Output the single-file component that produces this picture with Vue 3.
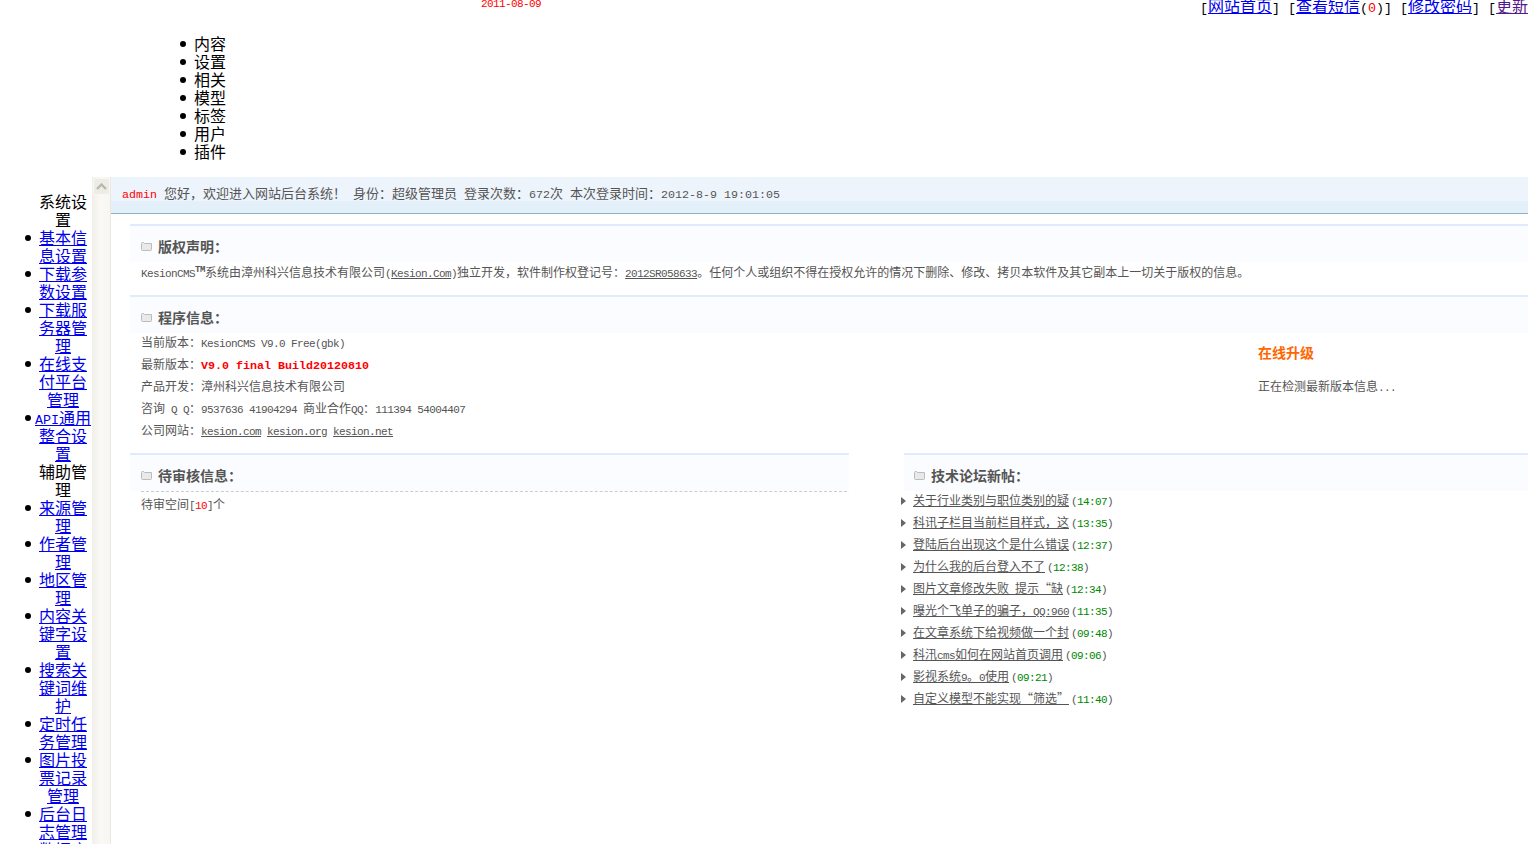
<script setup>
const menu = ["内容", "设置", "相关", "模型", "标签", "用户", "插件"];

const sysLinks = ["基本信息设置", "下载参数设置", "下载服务器管理", "在线支付平台管理"];
const auxLinks = [
  "来源管理",
  "作者管理",
  "地区管理",
  "内容关键字设置",
  "搜索关键词维护",
  "定时任务管理",
  "图片投票记录管理",
  "后台日志管理",
  "数据库备份",
];

const topics = [
  { title: "关于行业类别与职位类别的疑", time: "14:07" },
  { title: "科讯子栏目当前栏目样式，这", time: "13:35" },
  { title: "登陆后台出现这个是什么错误", time: "12:37" },
  { title: "为什么我的后台登入不了", time: "12:38" },
  { title: "图片文章修改失败 提示“缺", time: "12:34" },
  { title: "曝光个飞单子的骗子，QQ:960", time: "11:35" },
  { title: "在文章系统下给视频做一个封", time: "09:48" },
  { title: "科汛cms如何在网站首页调用", time: "09:06" },
  { title: "影视系统9。0使用", time: "09:21" },
  { title: "自定义模型不能实现“筛选”", time: "11:40" },
];

// ascii runs get the narrower mono face, the rest stays in the cjk face
const runs = (text) => text.match(/[\x20-\x7e]+|[^\x20-\x7e]+/g);
const isEn = (run) => /^[\x20-\x7e]/.test(run);
</script>

<template>
  <div class="page">
    <div class="top">
      <span class="date">2011-08-09</span>
      <div class="toplinks">
        [<a href="#">网站首页</a>]&nbsp;[<a href="#">查看短信</a>(<b>0</b>)]&nbsp;[<a href="#">修改密码</a>]&nbsp;[<a href="#" class="seen">更新缓存</a>]
      </div>
    </div>

    <ul class="menu">
      <li v-for="m in menu" :key="m">{{ m }}</li>
    </ul>

    <div class="main">
      <div class="side">
        <div class="side-title">系统设置</div>
        <ul class="side-list">
          <li v-for="s in sysLinks" :key="s"><a href="#">{{ s }}</a></li>
          <li>
            <a href="#"><span class="api"><span class="api-en">API</span>通用</span>整合设置</a>
          </li>
        </ul>
        <div class="side-title">辅助管理</div>
        <ul class="side-list">
          <li v-for="s in auxLinks" :key="s"><a href="#">{{ s }}</a></li>
        </ul>
      </div>

      <div class="bar">
        <div class="bar-btn">
          <svg width="11" height="7" viewBox="0 0 11 7"><path d="M1 6 L5.5 1.5 L10 6" fill="none" stroke="#b9b8b0" stroke-width="2.4" /></svg>
        </div>
      </div>

      <div class="content">
        <div class="welcome">
          <span class="w-en red">admin</span><span class="w-en">&nbsp;</span>您好，欢迎进入网站后台系统！<span class="w-en">&nbsp;</span>身份：超级管理员<span class="w-en">&nbsp;</span>登录次数：<span class="w-en">672</span>次<span class="w-en">&nbsp;</span>本次登录时间：<span class="w-en">2012-8-9 19:01:05</span>
        </div>

        <div class="panels">
          <section class="panel copy">
            <h3>
              <svg class="folder" width="11" height="9" viewBox="0 0 11 9"><path d="M1.5 8.5 H9.5 Q10.5 8.5 10.5 7.5 V1.5 H3.5 L2.5 .5 H1 L.5 1.5 V7.5 Q.5 8.5 1.5 8.5 Z" fill="#e9e9e9" stroke="#bcbcbc" /></svg>
              版权声明：
            </h3>
            <div class="row copy-row">
              <span class="en">KesionCMS</span><sup class="tm">TM</sup>系统由漳州科兴信息技术有限公司<span class="en">(<a href="#">Kesion.Com</a>)</span>独立开发，软件制作权登记号：<a href="#" class="en">2012SR058633</a>。任何个人或组织不得在授权允许的情况下删除、修改、拷贝本软件及其它副本上一切关于版权的信息。
            </div>
          </section>

          <section class="panel info">
            <h3>
              <svg class="folder" width="11" height="9" viewBox="0 0 11 9"><path d="M1.5 8.5 H9.5 Q10.5 8.5 10.5 7.5 V1.5 H3.5 L2.5 .5 H1 L.5 1.5 V7.5 Q.5 8.5 1.5 8.5 Z" fill="#e9e9e9" stroke="#bcbcbc" /></svg>
              程序信息：
            </h3>
            <div class="info-body">
              <div class="info-rows">
                <div class="row">当前版本：<span class="en">KesionCMS V9.0 Free(gbk)</span></div>
                <div class="row">最新版本：<span class="build">V9.0 final Build20120810</span></div>
                <div class="row">产品开发：漳州科兴信息技术有限公司</div>
                <div class="row">咨询<span class="en"> Q Q</span>：<span class="en">9537636 41904294 </span>商业合作<span class="en">QQ</span>：<span class="en">111394 54004407</span></div>
                <div class="row">公司网站：<a href="#" class="en">kesion.com</a><span class="en">&nbsp;</span><a href="#" class="en">kesion.org</a><span class="en">&nbsp;</span><a href="#" class="en">kesion.net</a></div>
              </div>
              <div class="upgrade">
                <div class="up-title">在线升级</div>
                <div class="up-text">正在检测最新版本信息<span class="en">...</span></div>
              </div>
            </div>
          </section>

          <div class="columns">
            <section class="panel pending">
              <h3 class="dashed">
                <svg class="folder" width="11" height="9" viewBox="0 0 11 9"><path d="M1.5 8.5 H9.5 Q10.5 8.5 10.5 7.5 V1.5 H3.5 L2.5 .5 H1 L.5 1.5 V7.5 Q.5 8.5 1.5 8.5 Z" fill="#e9e9e9" stroke="#bcbcbc" /></svg>
                待审核信息：
              </h3>
              <div class="row pending-row">待审空间<span class="en">[<span class="red">10</span>]</span>个</div>
            </section>

            <section class="panel forum">
              <h3>
                <svg class="folder" width="11" height="9" viewBox="0 0 11 9"><path d="M1.5 8.5 H9.5 Q10.5 8.5 10.5 7.5 V1.5 H3.5 L2.5 .5 H1 L.5 1.5 V7.5 Q.5 8.5 1.5 8.5 Z" fill="#e9e9e9" stroke="#bcbcbc" /></svg>
                技术论坛新帖：
              </h3>
              <ul class="topics">
                <li v-for="t in topics" :key="t.title">
                  <a href="#"><span v-for="(r, i) in runs(t.title)" :key="i" :class="{ en: isEn(r) }">{{ r }}</span></a>
                  <span class="en when">(<span class="green">{{ t.time }}</span>)</span>
                </li>
              </ul>
            </section>
          </div>
        </div>
      </div>
    </div>
  </div>
</template>

<style>
html,
body {
  overflow: hidden;
}
</style>

<style scoped>
.page {
  height: 844px;
  overflow: hidden;
  display: flex;
  flex-direction: column;
  font-family: "Liberation Serif", "Noto Sans CJK SC", serif;
  font-size: 16px;
  line-height: 18px;
  color: #000;
  background: #fff;
}

.top {
  height: 36px;
  flex: none;
  display: flex;
  align-items: flex-start;
  overflow: hidden;
}
.date {
  margin: -1px 0 0 481px;
  width: 719px;
  flex: none;
  font-family: "Liberation Mono", monospace;
  font-size: 11px;
  letter-spacing: -0.6px;
  line-height: 11px;
  color: #f00;
}
.toplinks {
  flex: none;
  margin-top: -4px;
  font-family: "Liberation Mono", monospace;
  font-size: 13.33px;
  white-space: nowrap;
}
.toplinks b {
  font-weight: normal;
  color: #f00;
}
.toplinks a {
  font-family: "Noto Sans CJK SC", sans-serif;
  font-size: 16px;
}
a {
  color: #00e;
}
.toplinks a.seen {
  color: #551a8b;
}

.menu {
  flex: none;
  margin: 0 0 15px;
  padding: 0 0 0 194px;
  list-style: none;
}
/* zero net width, so the dot follows the start of a centred line */
.menu li::before,
.side-list li::before {
  content: "";
  display: inline-block;
  width: 6px;
  height: 6px;
  margin: 0 8px 3px -14px;
  border-radius: 50%;
  background: #000;
}

.main {
  flex: 1;
  min-height: 0;
  display: flex;
}

.side {
  width: 92px;
  flex: none;
  box-sizing: border-box;
  padding: 17px 0 0 39px;
  overflow: hidden;
  text-align: center;
}
.side-title {
  width: 48px;
}
.side-list {
  width: 48px;
  margin: 0;
  padding: 0;
  list-style: none;
}
.api {
  white-space: nowrap;
  margin: 0 -4px;
}
.api-en {
  font-family: "Liberation Mono", monospace;
  font-size: 13.33px;
  line-height: 0;
}

.bar {
  width: 19px;
  flex: none;
  box-sizing: border-box;
  padding: 1px 0 0 1px;
  background: linear-gradient(to right, #f1efe9, #faf9f6 50%, #f7f6f1);
  border-right: 1px solid #ebe9dd;
}
.bar-btn {
  width: 17px;
  height: 17px;
  box-sizing: border-box;
  display: flex;
  align-items: center;
  justify-content: center;
  background: #eeede5;
  border: 1px solid #f8f7f3;
  border-radius: 2px;
}

.content {
  flex: 1;
  min-width: 0;
  overflow: hidden;
  font-family: "Noto Sans CJK SC", sans-serif;
  font-size: 12px;
  color: #555;
}
.welcome {
  height: 36px;
  line-height: 32px;
  padding-left: 11px;
  font-size: 13px;
  white-space: nowrap;
  background: linear-gradient(to bottom, #edf4fc 24px, #e4f0f9 24px);
  border-bottom: 1px solid #8ab4c4;
}
.w-en {
  font-family: "Liberation Mono", monospace;
  font-size: 11.67px;
  white-space: pre;
}
.red {
  color: #f00;
}
.green {
  color: #080;
}
.en {
  font-family: "Liberation Mono", monospace;
  font-size: 11px;
  letter-spacing: -0.6px;
  white-space: pre;
}

.panels {
  padding: 10px 0 0 19px;
}
.panel {
  border-top: 2px solid #e0ecfb;
}
.panel h3 {
  height: 36px;
  box-sizing: border-box;
  margin: 0;
  padding: 4px 0 0 11px;
  display: flex;
  align-items: center;
  font-size: 14px;
  font-weight: bold;
  color: #555;
  background: #fbfcff;
}
.folder {
  margin: 1px 6px 0 0;
}
.row {
  height: 22px;
  padding-left: 11px;
  line-height: 18px;
  white-space: nowrap;
}
.copy-row,
.pending-row {
  line-height: 20px;
}
.content a {
  color: #555;
}
.tm {
  font-family: "Liberation Mono", monospace;
  font-size: 9px;
  letter-spacing: -0.4px;
  font-weight: bold;
  line-height: 0;
  vertical-align: 5px;
}

.copy {
  margin-bottom: 11px;
}
.info {
  margin-bottom: 10px;
}
.info-body {
  display: flex;
}
.info-rows {
  flex: 1;
}
.upgrade {
  width: 270px;
  flex: none;
  padding-top: 9px;
}
.up-title {
  line-height: 20px;
  font-size: 14px;
  font-weight: bold;
  color: #f60;
}
.up-text {
  margin-top: 14px;
  line-height: 20px;
}
.build {
  font-family: "Liberation Mono", monospace;
  font-size: 11.67px;
  font-weight: bold;
  color: #f00;
}

.columns {
  display: flex;
  gap: 55px;
}
.pending {
  width: 719px;
  flex: none;
}
.panel h3.dashed {
  position: relative;
}
.panel h3.dashed::after {
  content: "";
  position: absolute;
  left: 11px;
  right: 2px;
  bottom: -1px;
  border-bottom: 1px dashed #ccc;
}
.pending-row {
  margin-top: 3px;
}
.forum {
  flex: 1;
  min-width: 0;
}
.panel.forum h3 {
  padding-left: 10px;
}
.topics {
  margin: 0 0 0 -3px;
  padding: 0;
  list-style: none;
}
.topics li {
  position: relative;
  height: 22px;
  padding-left: 12px;
  line-height: 18px;
  white-space: nowrap;
}
.topics li::before {
  content: "";
  position: absolute;
  left: 0;
  top: 6px;
  border-left: 5px solid #666;
  border-top: 4px solid transparent;
  border-bottom: 4px solid transparent;
}
.when {
  margin-left: 2px;
}
</style>
